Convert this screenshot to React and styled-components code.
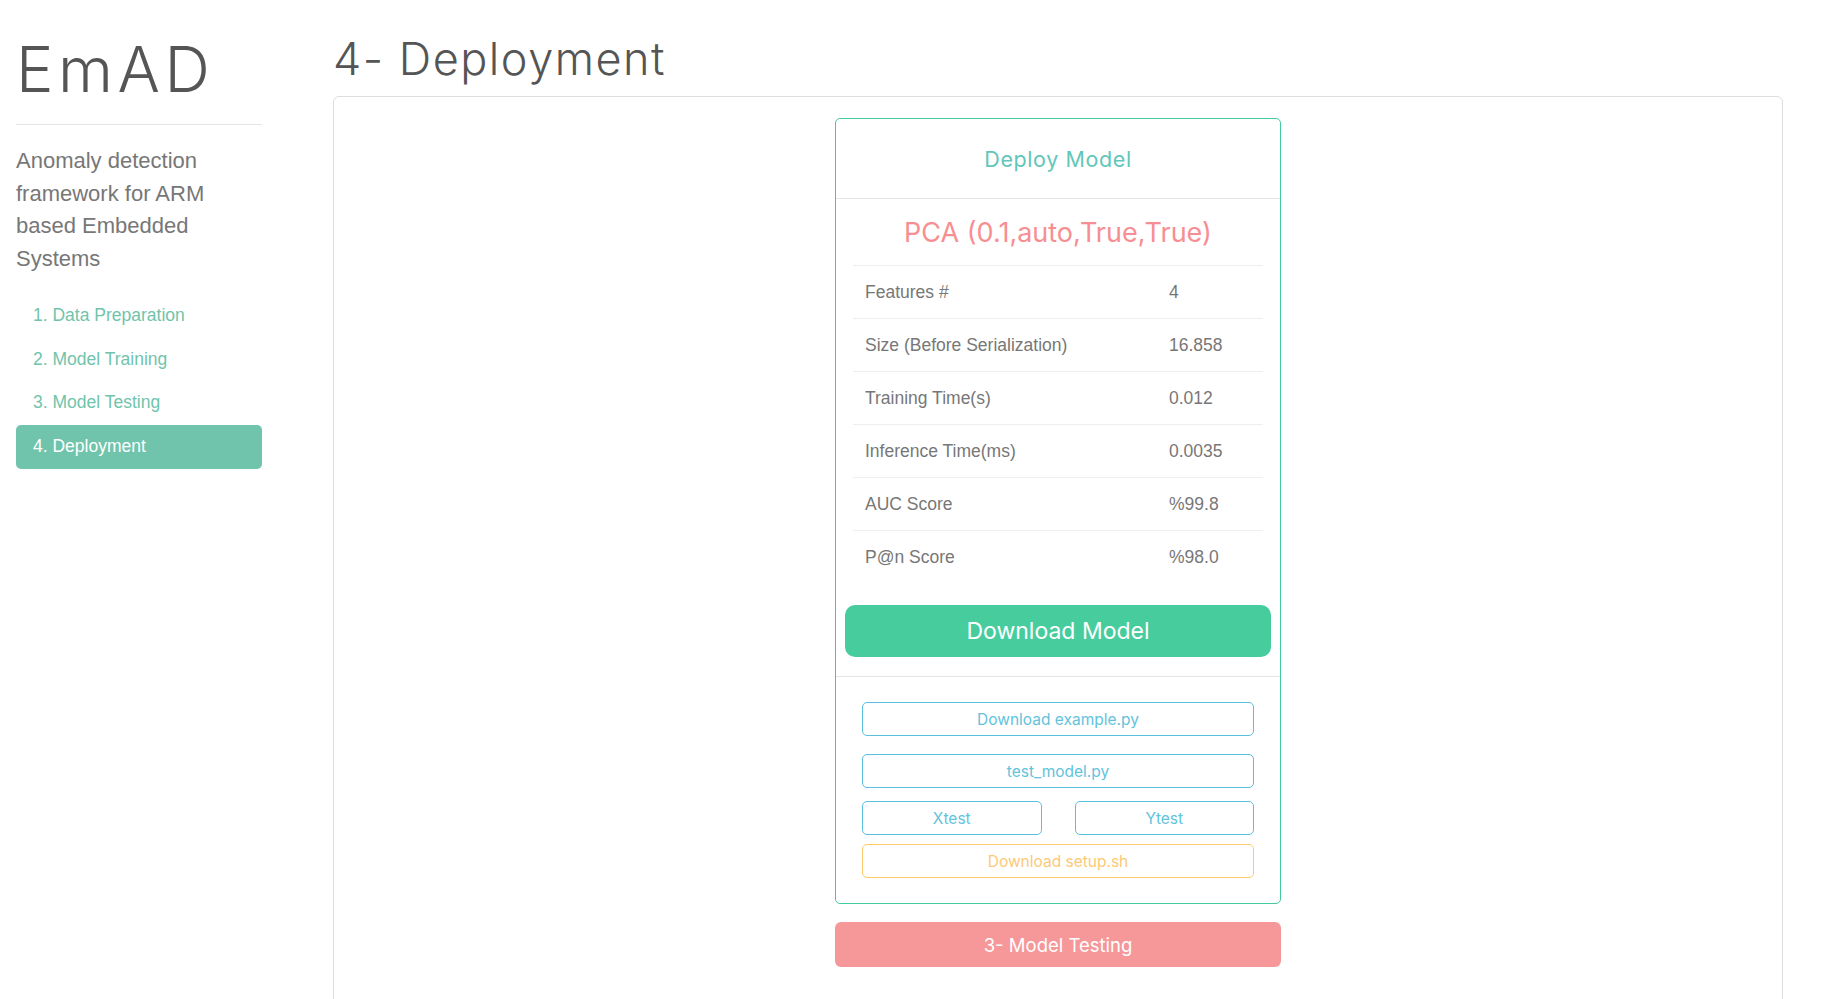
import styled, { createGlobalStyle } from "styled-components";

const display = `"Inter", "Lato", "Open Sans", sans-serif`;

const GlobalStyle = createGlobalStyle`
  html, body {
    margin: 0;
    overflow: hidden;
    background: #ffffff;
  }
  body {
    font-family: "Liberation Sans", Arial, sans-serif;
    color: #777;
  }
  * {
    box-sizing: border-box;
  }
`;

const Page = styled.div`
  display: flex;
  align-items: flex-start;
  padding: 0 48px 0 16px;
`;

const Sidebar = styled.aside`
  width: 246px;
  flex-shrink: 0;
`;

const Brand = styled.h1`
  font-family: ${display};
  font-weight: 300;
  font-size: 63px;
  line-height: 70px;
  color: #555;
  margin: 34px 0 0 0;
  letter-spacing: 4.5px;
`;

const Rule = styled.hr`
  border: 0;
  border-top: 1px solid #e5e5e5;
  margin: 20px 0 20px;
`;

const Tagline = styled.p`
  font-size: 22px;
  line-height: 32.7px;
  margin: 0 0 18px;
  color: #777;
`;

const Nav = styled.ul`
  list-style: none;
  padding: 0;
  margin: 0;
`;

const NavLink = styled.a`
  display: block;
  height: 43.75px;
  line-height: 43.75px;
  padding: 0 17px;
  border-radius: 5px;
  font-size: 17.5px;
  text-decoration: none;
  color: ${(p) => (p.$active ? "#ffffff" : "#70c4ab")};
  background: ${(p) => (p.$active ? "#70c4ab" : "transparent")};
`;

const Main = styled.main`
  flex: 1;
  margin-left: 71px;
`;

const Title = styled.h1`
  font-family: ${display};
  font-weight: 300;
  font-size: 45px;
  line-height: 50px;
  letter-spacing: 1.5px;
  color: #555;
  margin: 34px 0 12px;
`;

const Panel = styled.section`
  border: 1px solid #ddd;
  border-radius: 6px;
  height: 960px;
  display: flex;
  flex-direction: column;
  align-items: center;
  padding-top: 21px;
`;

const Card = styled.div`
  width: 446px;
  border: 1px solid #44cc9f;
  border-radius: 5px;
`;

const CardHeader = styled.div`
  height: 80px;
  display: flex;
  align-items: center;
  justify-content: center;
  border-bottom: 1px solid #e5e5e5;
  font-family: ${display};
  font-weight: 400;
  font-size: 21.5px;
  letter-spacing: 0.6px;
  color: #62c6ba;
`;

const CardBody = styled.div`
  padding: 0 9px 19px;
  border-bottom: 1px solid #e5e5e5;
`;

const ModelName = styled.div`
  height: 66px;
  display: flex;
  align-items: center;
  justify-content: center;
  font-family: ${display};
  font-weight: 400;
  font-size: 27px;
  color: #f78e92;
`;

const Stats = styled.div`
  margin: 0 8px 22px;
`;

const StatRow = styled.div`
  display: grid;
  grid-template-columns: 1fr 94px;
  height: 53px;
  align-items: center;
  border-top: 1px solid #eee;
  font-size: 17.5px;
  color: #777;
  padding-left: 12px;
`;

const PrimaryButton = styled.button`
  display: block;
  width: 100%;
  height: 52px;
  border: 0;
  border-radius: 10px;
  background: #47cd9d;
  color: #ffffff;
  font-family: ${display};
  font-weight: 400;
  font-size: 23px;
`;

const Files = styled.div`
  padding: 25px 26px 25px;
  display: flex;
  flex-direction: column;
`;

const Pair = styled.div`
  display: flex;
  gap: 33px;
  margin-top: ${(p) => p.$gap}px;
`;

const OutlineButton = styled.button`
  display: block;
  flex: ${(p) => (p.$half ? "1 1 0" : "0 0 auto")};
  width: ${(p) => (p.$half ? "auto" : "100%")};
  min-width: 0;
  height: 34px;
  margin-top: ${(p) => p.$gap || 0}px;
  background: #ffffff;
  border: 1px solid ${(p) => (p.$warn ? "#fecb6b" : "#5bc0de")};
  border-radius: 5px;
  color: ${(p) => (p.$warn ? "#fcc977" : "#62c3dc")};
  font-family: ${display};
  font-weight: 400;
  font-size: 15.5px;
`;

const BackButton = styled.button`
  width: 446px;
  height: 45px;
  margin-top: 18px;
  border: 0;
  border-radius: 6px;
  background: #f6979a;
  color: #ffffff;
  font-family: ${display};
  font-weight: 400;
  font-size: 18.5px;
`;

const stats = [
  ["Features #", "4"],
  ["Size (Before Serialization)", "16.858"],
  ["Training Time(s)", "0.012"],
  ["Inference Time(ms)", "0.0035"],
  ["AUC Score", "%99.8"],
  ["P@n Score", "%98.0"],
];

const steps = ["1. Data Preparation", "2. Model Training", "3. Model Testing", "4. Deployment"];

export default function App() {
  return (
    <>
      <GlobalStyle />
      <Page>
        <Sidebar>
          <Brand>EmAD</Brand>
          <Rule />
          <Tagline>Anomaly detection framework for ARM based Embedded Systems</Tagline>
          <Nav>
            {steps.map((s, i) => (
              <li key={s}>
                <NavLink href="#" $active={i === 3}>
                  {s}
                </NavLink>
              </li>
            ))}
          </Nav>
        </Sidebar>
        <Main>
          <Title>4- Deployment</Title>
          <Panel>
            <Card>
              <CardHeader>Deploy Model</CardHeader>
              <CardBody>
                <ModelName>PCA (0.1,auto,True,True)</ModelName>
                <Stats>
                  {stats.map(([k, v]) => (
                    <StatRow key={k}>
                      <span>{k}</span>
                      <span>{v}</span>
                    </StatRow>
                  ))}
                </Stats>
                <PrimaryButton>Download Model</PrimaryButton>
              </CardBody>
              <Files>
                <OutlineButton>Download example.py</OutlineButton>
                <OutlineButton $gap={18}>test_model.py</OutlineButton>
                <Pair $gap={13}>
                  <OutlineButton $half>Xtest</OutlineButton>
                  <OutlineButton $half>Ytest</OutlineButton>
                </Pair>
                <OutlineButton $gap={9} $warn>
                  Download setup.sh
                </OutlineButton>
              </Files>
            </Card>
            <BackButton>3- Model Testing</BackButton>
          </Panel>
        </Main>
      </Page>
    </>
  );
}
